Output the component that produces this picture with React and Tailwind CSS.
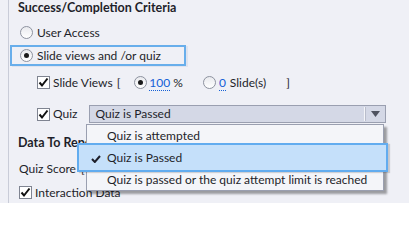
import React from 'react';

const Radio = ({ on }) => (
  <span className="w-[13px] h-[13px] rounded-full border border-[#8d929f] bg-gradient-to-b from-[#e9eaee] to-white flex items-center justify-center shrink-0">
    {on && <span className="w-[5px] h-[5px] rounded-full bg-[#1b1b1b]" />}
  </span>
);

const Check = () => (
  <span className="w-[13px] h-[13px] border border-[#7f8491] bg-white flex items-center justify-center shrink-0">
    <svg width="11" height="11" viewBox="0 0 11 11">
      <path d="M1.5 5.5 L4 8.5 L9.5 1.5" fill="none" stroke="#111" strokeWidth="2" />
    </svg>
  </span>
);

const Num = ({ children }) => (
  <span className="text-[#1560d6] border-b border-dotted border-[#1560d6] leading-[13px]">{children}</span>
);

export default function App() {
  return (
    <div className="w-[409px] h-[203px] bg-[#eff0f6] relative overflow-hidden whitespace-nowrap font-['Lato',sans-serif] text-[12px] text-[#1e1f2a]">
      <div className="ml-[8px] h-full border-l border-[#c9ccd8] pl-[9px]">
        {/* Completion criteria */}
        <div className="h-[16px] flex items-center font-bold text-[12.5px]">Success/Completion Criteria</div>

        <div className="mt-[8px] h-[17px] flex items-center gap-[4px] pl-[2px]">
          <Radio />
          <span>User Access</span>
        </div>

        <div className="mt-[4px] -ml-[8px] w-[176px] h-[21px] border-2 border-[#68aeeb] flex items-center gap-[4px] pl-[8px] shadow-[2px_1px_0_#dfe3ee]">
          <Radio on />
          <span>Slide views and /or quiz</span>
        </div>

        <div className="mt-[8px] h-[17px] flex items-center pl-[19px]">
          <Check />
          <span className="ml-[3px]">Slide Views</span>
          <span className="ml-[4px]">[</span>
          <span className="ml-[14px]"><Radio on /></span>
          <span className="ml-[2px]"><Num>100</Num></span>
          <span className="ml-[3px]">%</span>
          <span className="ml-[20px]"><Radio /></span>
          <span className="ml-[3px]"><Num>0</Num></span>
          <span className="ml-[4px]">Slide(s)</span>
          <span className="ml-[20px]">]</span>
        </div>

        <div className="mt-[14px] h-[18px] flex items-center pl-[19px]">
          <Check />
          <span className="ml-[3px]">Quiz</span>
          <div className="ml-[11px] w-[297px] h-[18px] border border-[#9a9fb0] bg-[#d4d8e6] flex items-center pl-[6px]">
            <span className="flex-1">Quiz is Passed</span>
            <span className="w-[1px] h-[14px] bg-[#f4f5f9]" />
            <span className="w-[1px] h-[14px] bg-[#b9bdcb] mr-[5px]" />
            <svg width="9" height="6" viewBox="0 0 9 6" className="mr-[5px]">
              <path d="M0 0 H9 L4.5 6 Z" fill="#4f5360" />
            </svg>
          </div>
        </div>

        <div className="mt-[12px] h-[17px] flex items-center font-bold text-[12.5px]">Data To Report</div>

        <div className="mt-[8px] h-[17px] flex items-center pl-[1px]">
          <span>Quiz Score</span>
          <span className="ml-[5px]">[</span>
        </div>

        <div className="mt-[7px] h-[17px] flex items-center pl-[1px]">
          <Check />
          <span className="ml-[3px]">Interaction Data</span>
        </div>
      </div>

      {/* open dropdown list */}
      <div className="absolute left-[86px] top-[124px] w-[298px] h-[67px] border border-[#9a9fb0] bg-[#f4f5f9] shadow-[3px_3px_2px_rgba(0,0,0,0.35)]">
        <div className="h-[22px] flex items-center pl-[20px]">Quiz is attempted</div>
        <div className="h-[22px] relative flex items-center pl-[20px]">
          <div className="absolute -left-[10px] -right-[5px] -top-[4px] -bottom-[3px] border-2 border-[#62acef] bg-[#c5e0fa] shadow-[2px_1px_1px_rgba(0,0,0,0.15)]" />
          <svg width="10" height="8" viewBox="0 0 10 8" className="absolute left-[4px] top-[8px]">
            <path d="M1 4 L3.8 7 L9 1" fill="none" stroke="#1e1f2a" strokeWidth="2" />
          </svg>
          <span className="relative">Quiz is Passed</span>
        </div>
        <div className="h-[22px] flex items-center pl-[20px]">Quiz is passed or the quiz attempt limit is reached</div>
      </div>
    </div>
  );
}
